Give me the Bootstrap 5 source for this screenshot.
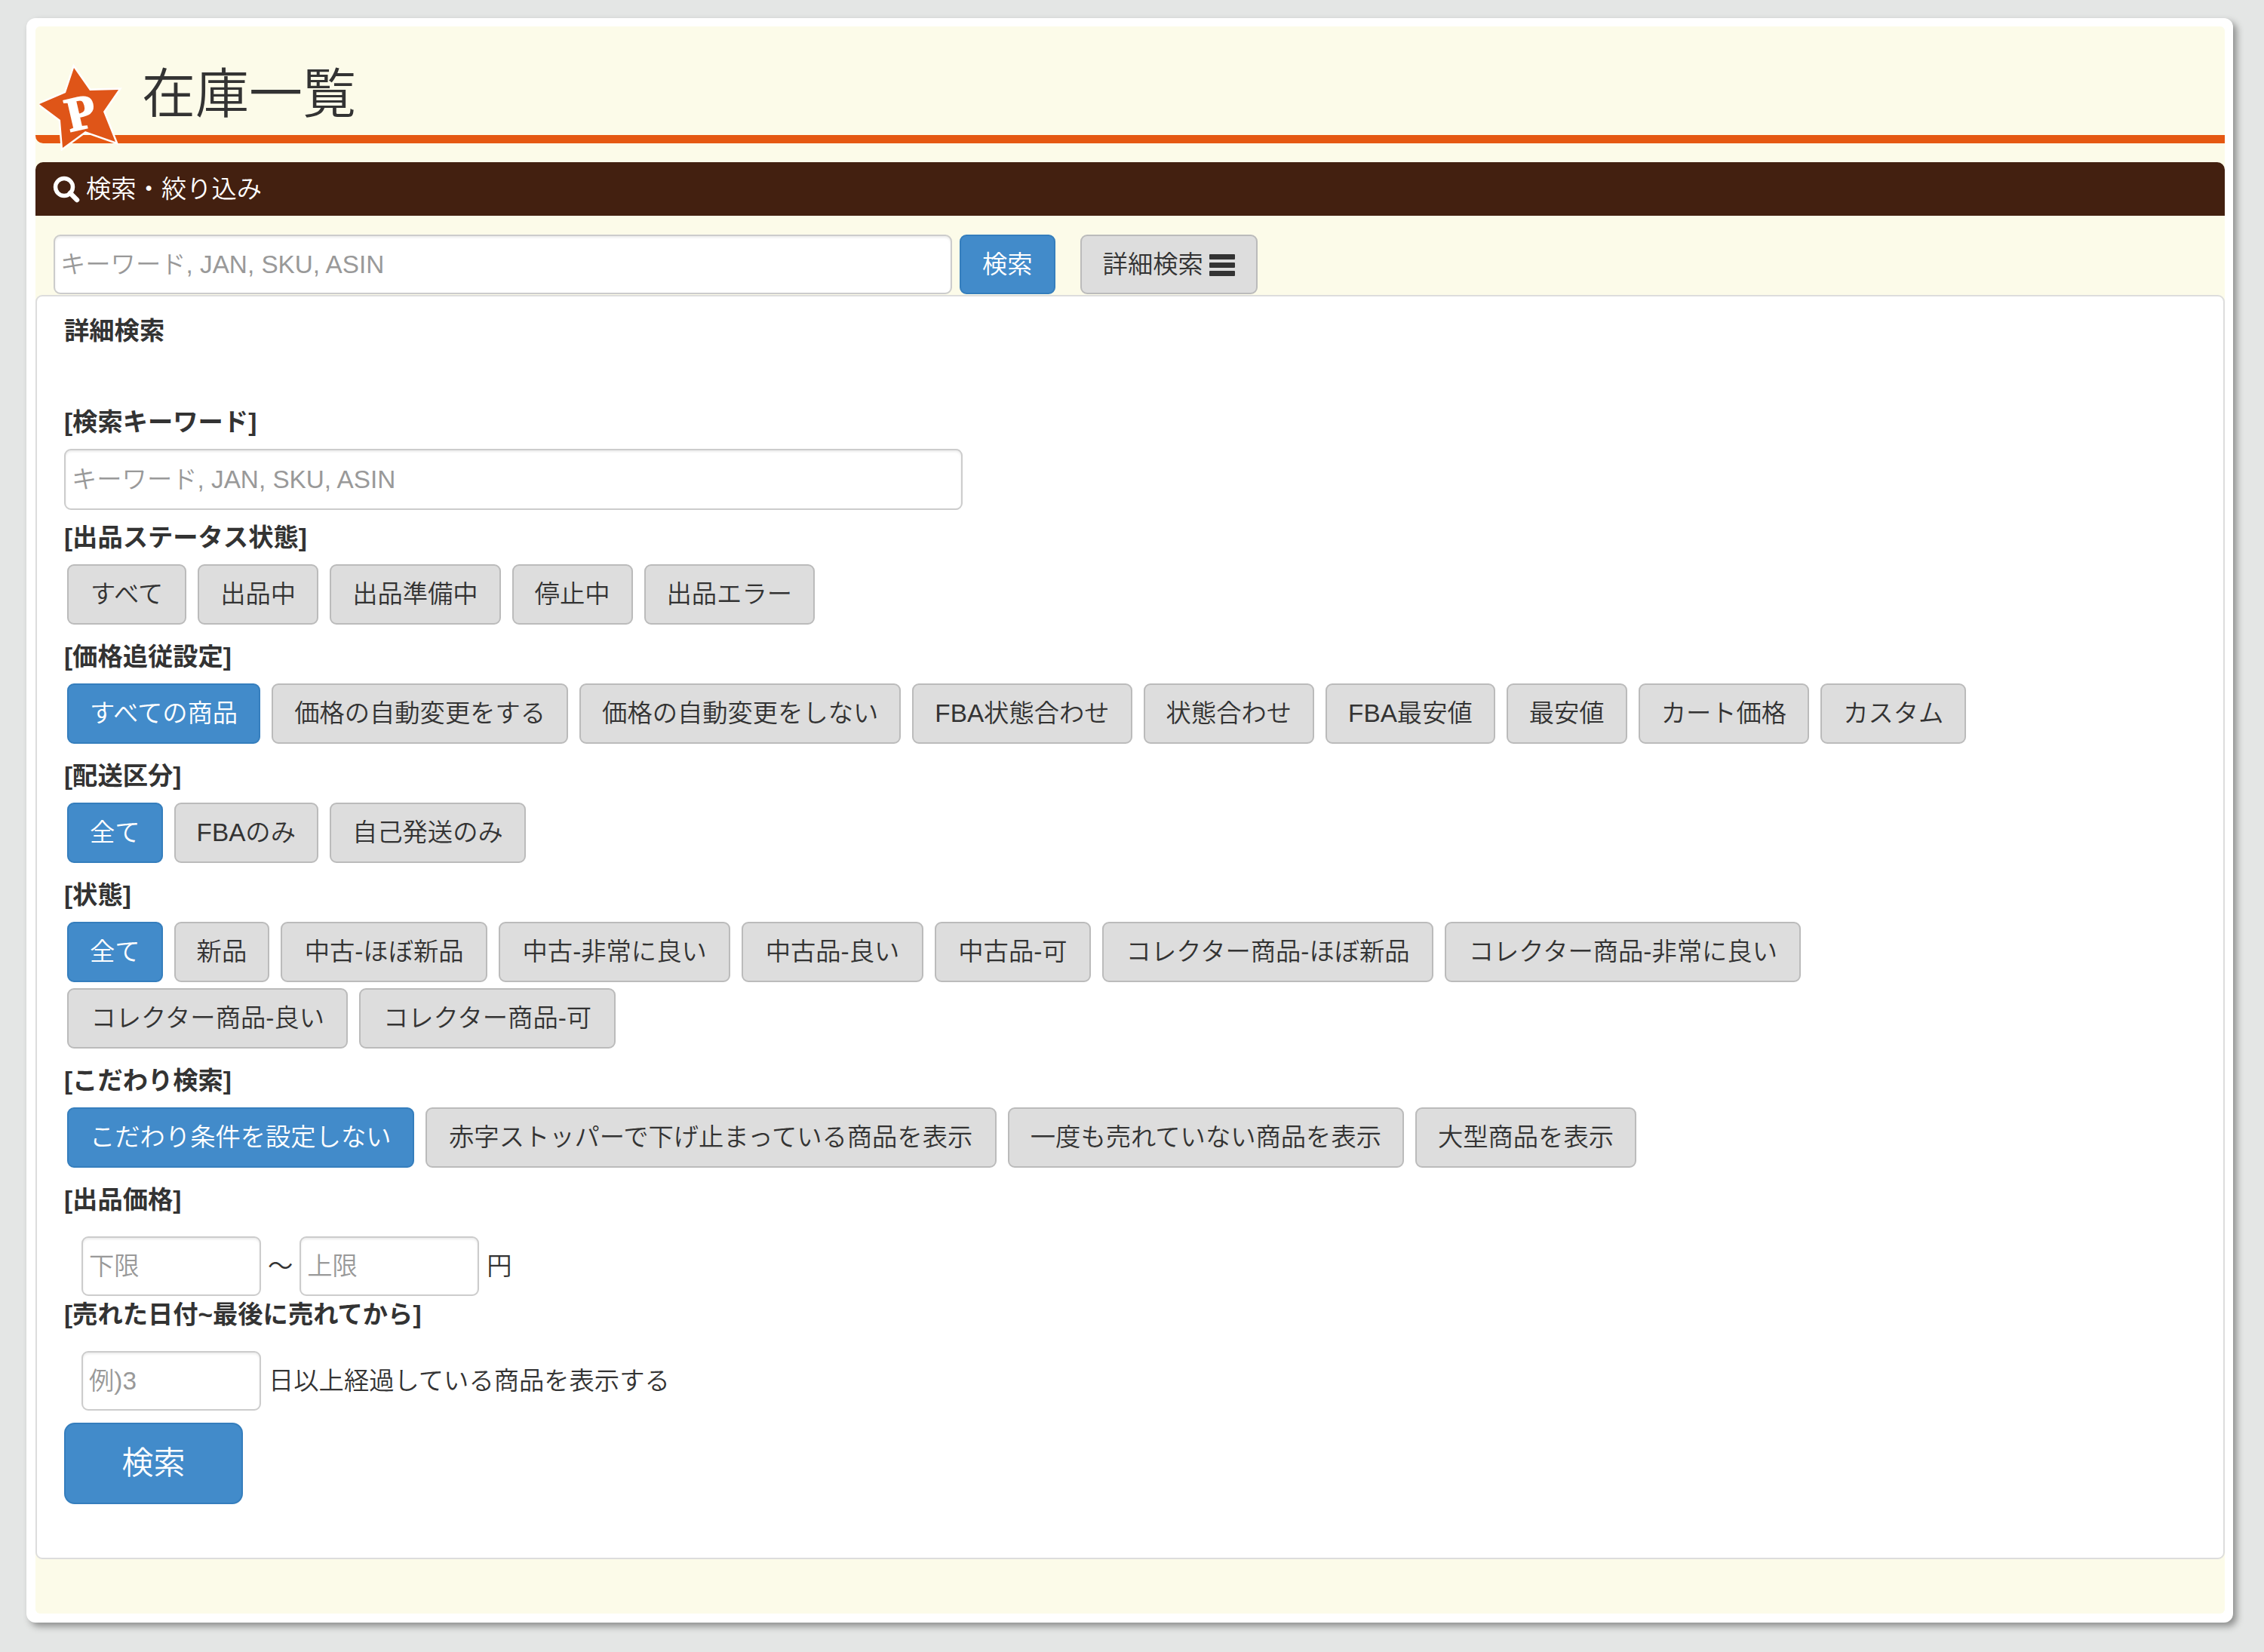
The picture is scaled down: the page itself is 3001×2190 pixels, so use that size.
<!DOCTYPE html>
<html lang="ja">
<head>
  <meta charset="UTF-8">
  <title>在庫一覧</title>
  <link href="https://cdn.jsdelivr.net/npm/bootstrap@5.3.0/dist/css/bootstrap.min.css" rel="stylesheet">
  <style>
    body { background: #e4e6e5; color: #333; font-family: "Liberation Sans", "Noto Sans CJK JP", sans-serif; font-size: 33.3px; font-weight: 350; line-height: 46px; padding: 24px 41px 34px 35px; }
    .sheet { background: #fff; border-radius: 12px; padding: 11px 11px 12px 12px; box-shadow: 5px 5px 10px rgba(0,0,0,.38); }
    .cream { background: #fcfbe9; padding-bottom: 72px; border-radius: 6px; }
    .page-head { position: relative; height: 155px; padding: 36px 0 0 141px; border-bottom: 11px solid #e55812; border-bottom-left-radius: 10px; }
    .page-head h1 { font-size: 71px; line-height: 108px; margin: 0; font-weight: 350; color: #333; }
    .star-logo { position: absolute; left: 5px; top: 50px; width: 115px; height: 115px; }
    .bar-head { background: #432010; color: #fff; height: 71px; margin-top: 25px; padding: 0 23px; border-radius: 10px 10px 0 0; }
    .search-row { padding: 25px 24px 1px; }
    .inp.form-control { height: 81px; font-size: 33.3px; font-weight: 350; padding: 0 8px; border: 2px solid #ccc; border-radius: 9px; color: #333; box-shadow: inset 0 2px 3px rgba(0,0,0,.08); }
    .inp.form-control::placeholder { color: #999; }
    .top-inp.form-control { width: 1191px; height: 79px; padding: 0 7px; }
    .wide-inp.form-control { width: 1191px; }
    .btn-g, .btn-b { --bs-btn-font-size: 33.3px; --bs-btn-font-weight: 350; --bs-btn-line-height: 46px; --bs-btn-padding-x: 28px; --bs-btn-padding-y: 15px; --bs-btn-border-width: 2px; --bs-btn-border-radius: 9px; }
    .btn-g { --bs-btn-bg: #ddd; --bs-btn-border-color: #bbb; --bs-btn-color: #333; --bs-btn-hover-bg: #ccc; --bs-btn-hover-color: #333; }
    .btn-b { --bs-btn-bg: #428bca; --bs-btn-border-color: #357ebd; --bs-btn-color: #fff; --bs-btn-hover-bg: #3276b1; --bs-btn-hover-color: #fff; }
    .btn-big { --bs-btn-font-size: 42px; --bs-btn-line-height: 60px; --bs-btn-padding-x: 38px; --bs-btn-padding-y: 22px; --bs-btn-border-radius: 14px; width: 237px; }
    .btn-hy { --bs-btn-padding-x: 29.5px; }
    .btn-st { --bs-btn-padding-x: 29px; }
    .top-btn { height: 79px; padding-top: 14px; padding-bottom: 14px; }
    .search-btn { margin-left: 10px; }
    .detail-btn { margin-left: 33px; }
    .menu-ico { display: inline-block; width: 34px; height: 29px; margin-left: 8px; vertical-align: -4px; }
    .detail-panel { --bs-card-border-width: 2px; --bs-card-border-color: #ddd; --bs-card-border-radius: 9px; --bs-card-bg: #fff; --bs-card-spacer-x: 36px; --bs-card-spacer-y: 23px; --bs-card-color: #333; }
    .sec-label { font-weight: 700; margin-bottom: 12px; }
    .detail-title { font-weight: 700; margin-bottom: 75px; }
    .sec { margin-bottom: 20px; }
    .key-sec { margin-bottom: 14px; }
    .btn-wrap { padding-left: 4px; gap: 15px; }
    .range-row { padding-left: 23px; margin-top: 25px; }
    .range-inp.form-control { width: 238px; height: 79px; }
    .range-gap { margin-bottom: 2px; }
    .range-sep { padding: 0 9px; }
    .range-unit { margin-left: 10px; }
  </style>
</head>
<body>

<div class="sheet">
  <div class="cream">
    <!-- header -->
    <div class="page-head">
      <svg class="star-logo" viewBox="52 85 115 115">
        <polygon points="98,90 119,120 157,119 137,148 153,188 113,174 83,196 80,159 52,138 87,123" fill="#df5518" stroke="#fff" stroke-width="5" paint-order="stroke"/>
        <text x="107" y="171" transform="rotate(-13 107 150)" text-anchor="middle" font-family="Liberation Serif" font-weight="700" font-size="64" fill="#fff" stroke="#fff" stroke-width="2">P</text>
      </svg>
      <h1>在庫一覧</h1>
    </div>

    <div class="bar-head d-flex align-items-center gap-2">
      <svg width="36" height="36" viewBox="0 0 36 36"><circle cx="15" cy="15" r="11.5" fill="none" stroke="#fff" stroke-width="5.5"/><line x1="23" y1="23" x2="32" y2="32" stroke="#fff" stroke-width="6.5" stroke-linecap="round"/></svg>
      <span>検索・絞り込み</span>
    </div>

    <div class="search-row d-flex">
      <input class="form-control inp top-inp" type="text" placeholder="キーワード, JAN, SKU, ASIN">
      <button class="btn btn-b top-btn search-btn" type="button">検索</button>
      <button class="btn btn-g top-btn detail-btn" type="button">詳細検索<svg class="menu-ico" viewBox="0 0 34 29"><path d="M1 0h32a1 1 0 0 1 1 1v5a1 1 0 0 1-1 1H1a1 1 0 0 1-1-1V1a1 1 0 0 1 1-1zM1 11h32a1 1 0 0 1 1 1v5a1 1 0 0 1-1 1H1a1 1 0 0 1-1-1v-5a1 1 0 0 1 1-1zM1 22h32a1 1 0 0 1 1 1v5a1 1 0 0 1-1 1H1a1 1 0 0 1-1-1v-5a1 1 0 0 1 1-1z" fill="#333"/></svg></button>
    </div>

    <!-- detail search -->
    <div class="card detail-panel">
      <div class="card-body">
        <div class="detail-title">詳細検索</div>

        <div class="sec-label">[検索キーワード]</div>
        <div class="key-sec">
          <input class="form-control inp wide-inp" type="text" placeholder="キーワード, JAN, SKU, ASIN">
        </div>

        <div class="sec-label">[出品ステータス状態]</div>
        <div class="sec d-flex btn-wrap">
          <button class="btn btn-g btn-st">すべて</button>
          <button class="btn btn-g">出品中</button>
          <button class="btn btn-g">出品準備中</button>
          <button class="btn btn-g">停止中</button>
          <button class="btn btn-g">出品エラー</button>
        </div>

        <div class="sec-label">[価格追従設定]</div>
        <div class="sec d-flex btn-wrap">
          <button class="btn btn-b">すべての商品</button>
          <button class="btn btn-g">価格の自動変更をする</button>
          <button class="btn btn-g">価格の自動変更をしない</button>
          <button class="btn btn-g">FBA状態合わせ</button>
          <button class="btn btn-g">状態合わせ</button>
          <button class="btn btn-g">FBA最安値</button>
          <button class="btn btn-g">最安値</button>
          <button class="btn btn-g">カート価格</button>
          <button class="btn btn-g">カスタム</button>
        </div>

        <div class="sec-label">[配送区分]</div>
        <div class="sec d-flex btn-wrap">
          <button class="btn btn-b">全て</button>
          <button class="btn btn-g">FBAのみ</button>
          <button class="btn btn-g">自己発送のみ</button>
        </div>

        <div class="sec-label">[状態]</div>
        <div class="d-flex btn-wrap mb-2">
          <button class="btn btn-b">全て</button>
          <button class="btn btn-g">新品</button>
          <button class="btn btn-g btn-hy">中古-ほぼ新品</button>
          <button class="btn btn-g btn-hy">中古-非常に良い</button>
          <button class="btn btn-g btn-hy">中古品-良い</button>
          <button class="btn btn-g btn-hy">中古品-可</button>
          <button class="btn btn-g btn-hy">コレクター商品-ほぼ新品</button>
          <button class="btn btn-g btn-hy">コレクター商品-非常に良い</button>
        </div>
        <div class="sec d-flex btn-wrap">
          <button class="btn btn-g btn-hy">コレクター商品-良い</button>
          <button class="btn btn-g btn-hy">コレクター商品-可</button>
        </div>

        <div class="sec-label">[こだわり検索]</div>
        <div class="sec d-flex btn-wrap">
          <button class="btn btn-b">こだわり条件を設定しない</button>
          <button class="btn btn-g btn-hy">赤字ストッパーで下げ止まっている商品を表示</button>
          <button class="btn btn-g">一度も売れていない商品を表示</button>
          <button class="btn btn-g">大型商品を表示</button>
        </div>

        <div class="sec-label mb-0">[出品価格]</div>
        <div class="d-flex align-items-center range-row range-gap">
          <input class="form-control inp range-inp" type="text" placeholder="下限">
          <span class="range-sep">〜</span>
          <input class="form-control inp range-inp" type="text" placeholder="上限">
          <span class="range-unit">円</span>
        </div>

        <div class="sec-label mb-0">[売れた日付~最後に売れてから]</div>
        <div class="d-flex align-items-center range-row">
          <input class="form-control inp range-inp" type="text" placeholder="例)3">
          <span class="range-unit">日以上経過している商品を表示する</span>
        </div>

        <button class="btn btn-b btn-big mt-3 mb-5">検索</button>
      </div>
    </div>
  </div>
</div>

</body>
</html>
